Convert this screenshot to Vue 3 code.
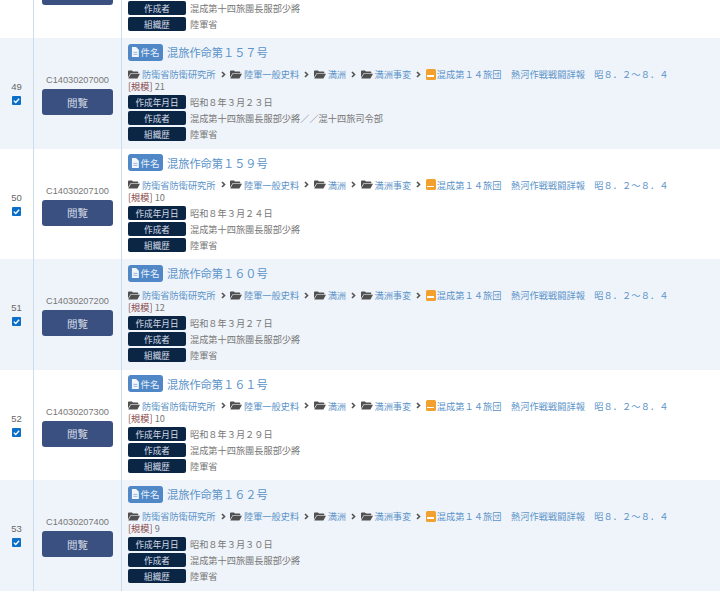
<template>
  <div class="page">
    <div class="result-list">
      <div v-for="row in rows" :key="row.no" class="row" :class="{ striped: row.no % 2 === 1 }">
        <div class="col-no">
          <span class="no">{{ row.no }}</span>
          <span class="check">
            <svg viewBox="0 0 10 10" width="7" height="7">
              <path d="M1.2 5.2 3.9 7.8 8.8 2.4" fill="none" stroke="#fff" stroke-width="1.9" />
            </svg>
          </span>
        </div>
        <div class="col-code">
          <span class="code">{{ row.code }}</span>
          <button type="button" class="view-btn">閲覧</button>
        </div>
        <div class="col-main">
          <div class="title-line">
            <span class="subject-badge">
              <svg viewBox="0 0 10 13" width="8" height="10">
                <path d="M1 0h5.4L10 3.6V13H1z" fill="#f2f6fb" />
                <path d="M3 7h5M3 9.6h5" stroke="#7ea8d8" stroke-width="1" />
              </svg>
              <span>件名</span>
            </span>
            <a class="title">{{ row.title }}</a>
          </div>
          <div class="crumbs">
            <template v-for="c in crumbs" :key="c">
              <svg class="folder" viewBox="0 0 14 10" width="12" height="9">
                <path d="M0 1.2C0 .6.4.2 1 .2h3.6l1.2 1.3H11c.6 0 1 .4 1 1V3.4H3L0 8.6z" fill="#505050" />
                <path d="M3.4 4.1H14L11 9.8H.3z" fill="#505050" />
              </svg>
              <a class="crumb">{{ c }}</a>
              <svg class="sep" viewBox="0 0 6 8" width="5" height="7">
                <path d="M1.2 1 4.2 4 1.2 7" fill="none" stroke="#555" stroke-width="2" />
              </svg>
            </template>
            <span class="book"><i></i></span>
            <a class="crumb last">{{ lastCrumb }}</a>
          </div>
          <div class="scale"><span class="scale-label">[規模]</span> {{ row.scale }}</div>
          <div class="meta">
            <span class="meta-label">作成年月日</span><span class="meta-value">{{ row.date }}</span>
            <span class="meta-label">作成者</span><span class="meta-value">{{ row.author }}</span>
            <span class="meta-label">組織歴</span><span class="meta-value">陸軍省</span>
          </div>
        </div>
      </div>
    </div>
  </div>
</template>

<script setup>
const crumbs = ['防衛省防衛研究所', '陸軍一般史料', '満洲', '満洲事変']
const lastCrumb = '混成第１４旅団　熱河作戦戦闘詳報　昭８．２～８．４'
const author = '混成第十四旅團長服部少將'

const rows = [
  { no: 48, code: 'C14030206900', title: '混旅作命第１５６号', scale: 12, date: '昭和８年３月２２日', author },
  { no: 49, code: 'C14030207000', title: '混旅作命第１５７号', scale: 21, date: '昭和８年３月２３日', author: author + '／／混十四旅司令部' },
  { no: 50, code: 'C14030207100', title: '混旅作命第１５９号', scale: 10, date: '昭和８年３月２４日', author },
  { no: 51, code: 'C14030207200', title: '混旅作命第１６０号', scale: 12, date: '昭和８年３月２７日', author },
  { no: 52, code: 'C14030207300', title: '混旅作命第１６１号', scale: 10, date: '昭和８年３月２９日', author },
  { no: 53, code: 'C14030207400', title: '混旅作命第１６２号', scale: 9, date: '昭和８年３月３０日', author },
]
</script>

<style>
html,
body {
  margin: 0;
  background: #fff;
  overflow: hidden;
}
</style>

<style scoped>
.page {
  height: 593px;
  overflow: hidden;
  font-family: "Noto Sans CJK JP", "Liberation Sans", sans-serif;
  color: #777;
}

.result-list {
  margin-top: -72.5px;
}

.row {
  display: grid;
  grid-template-columns: 34px 88px 1fr;
  height: 110.5px;
  background: #fff;
}

.row.striped {
  background: #eff4fa;
}

.col-no,
.col-code {
  display: flex;
  flex-direction: column;
  align-items: center;
  justify-content: center;
  border-right: 1.5px solid #cddcec;
}

.col-no {
  gap: 3px;
  box-sizing: border-box;
}

.no {
  font-family: "Liberation Sans", sans-serif;
  font-size: 9.5px;
  line-height: 12px;
  color: #666;
}

.check {
  width: 9px;
  height: 9px;
  border-radius: 1px;
  background: #0b6fc9;
  display: flex;
  align-items: center;
  justify-content: center;
}

.col-code {
  gap: 2px;
  padding-top: 3px;
  box-sizing: border-box;
}

.code {
  font-family: "Liberation Sans", sans-serif;
  font-size: 9.2px;
  line-height: 13px;
  color: #777;
}

.view-btn {
  width: 71px;
  height: 26px;
  border: none;
  border-radius: 3px;
  background: #3a5080;
  color: #d5dbe6;
  font-family: inherit;
  font-size: 10.5px;
  padding: 0;
}

.col-main {
  padding: 5px 0 0 6px;
  min-width: 0;
}

.title-line {
  display: flex;
  align-items: center;
  gap: 4px;
  height: 18px;
}

.subject-badge {
  display: flex;
  align-items: center;
  justify-content: center;
  gap: 1px;
  width: 35px;
  height: 17px;
  border-radius: 3px;
  background: #4f87c7;
  color: #e6eef8;
  font-size: 9.5px;
}

.title {
  font-size: 11.2px;
  color: #5b93c9;
  white-space: nowrap;
}

.crumbs {
  display: flex;
  align-items: center;
  margin-top: 7px;
  height: 12px;
  font-size: 9.2px;
  white-space: nowrap;
}

.crumb {
  color: #5b93c9;
}

.crumb.last {
  letter-spacing: 0.08px;
}

.folder {
  margin-right: 2px;
}

.sep {
  margin: 0 4.5px 0 5px;
}

.book {
  width: 10px;
  height: 11px;
  margin-right: 1px;
  border-radius: 1.5px;
  background: #f2a12e;
  display: flex;
  align-items: flex-end;
  justify-content: center;
  padding-bottom: 3px;
  box-sizing: border-box;
}

.book i {
  width: 7px;
  height: 1.5px;
  background: #fff;
}

.scale {
  font-size: 9.2px;
  line-height: 12px;
  color: #777;
}

.scale-label {
  color: #8a4a4a;
}

.meta {
  display: grid;
  grid-template-columns: 58px 1fr;
  column-gap: 4px;
  row-gap: 2px;
  margin-top: 3px;
  align-items: center;
}

.meta-label {
  height: 14px;
  border-radius: 2px;
  background: #0b2545;
  color: #d7dfe9;
  font-size: 8.6px;
  line-height: 14px;
  text-align: center;
}

.meta-value {
  font-size: 9.2px;
  color: #777;
  white-space: nowrap;
}
</style>
